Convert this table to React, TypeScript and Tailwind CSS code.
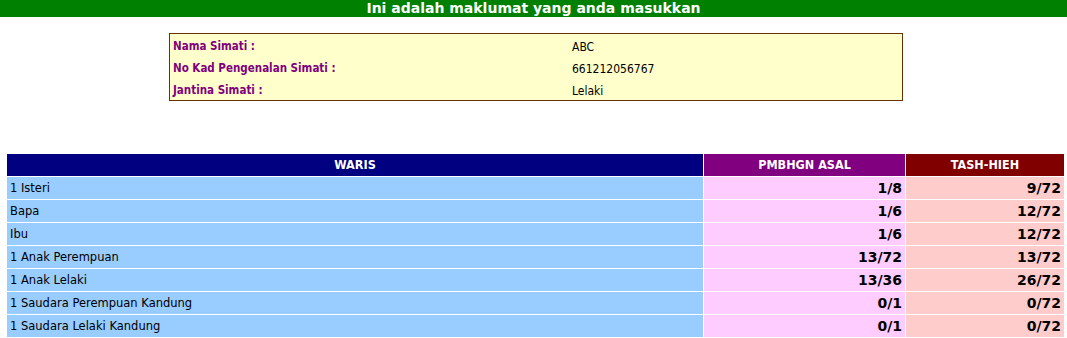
import React from 'react';

const rows = [
  { waris: '1 Isteri', asal: '1/8', tash: '9/72' },
  { waris: 'Bapa', asal: '1/6', tash: '12/72' },
  { waris: 'Ibu', asal: '1/6', tash: '12/72' },
  { waris: '1 Anak Perempuan', asal: '13/72', tash: '13/72' },
  { waris: '1 Anak Lelaki', asal: '13/36', tash: '26/72' },
  { waris: '1 Saudara Perempuan Kandung', asal: '0/1', tash: '0/72' },
  { waris: '1 Saudara Lelaki Kandung', asal: '0/1', tash: '0/72' },
];

const info = [
  { label: 'Nama Simati :', value: 'ABC' },
  { label: 'No Kad Pengenalan Simati :', value: '661212056767' },
  { label: 'Jantina Simati :', value: 'Lelaki' },
];

export default function App() {
  return (
    <div className="w-[1067px] h-[338px] bg-white overflow-hidden text-[12px] text-black font-['DejaVu_Sans_Condensed','DejaVu_Sans',sans-serif]">
      {/* Title bar */}
      <div className="h-[17px] bg-[#008000] text-white font-bold text-[14px] leading-[16px] text-center font-['DejaVu_Sans',sans-serif]">
        Ini adalah maklumat yang anda masukkan
      </div>

      {/* Simati info */}
      <div className="mt-[16px] ml-[169px] w-[734px] h-[68px] border border-[#663300] bg-[#ffffcc] py-px">
        {info.map((item) => (
          <div key={item.label} className="flex h-[22px] items-center pt-px">
            <div className="w-[402px] pl-[3px] font-bold text-[11.5px] text-[#800080]">{item.label}</div>
            <div>{item.value}</div>
          </div>
        ))}
      </div>

      {/* Waris table */}
      <div className="mt-[53px] ml-[7px] w-[1057px] grid grid-cols-[696px_201px_158px] gap-px">
        <div className="h-[22px] bg-[#000080] text-white font-bold text-[12.5px] flex items-center justify-center">WARIS</div>
        <div className="h-[22px] bg-[#800080] text-white font-bold text-[12.5px] flex items-center justify-center">PMBHGN ASAL</div>
        <div className="h-[22px] bg-[#800000] text-white font-bold text-[12.5px] flex items-center justify-center">TASH-HIEH</div>
        {rows.map((r) => (
          <React.Fragment key={r.waris}>
            <div className="h-[22px] bg-[#99ccff] flex items-center pl-[3px] pt-[2px] text-[11.5px] font-['DejaVu_Sans',sans-serif]">{r.waris}</div>
            <div className="h-[22px] bg-[#ffccff] flex items-center justify-end pr-[3px] pt-px font-bold text-[14px] font-['DejaVu_Sans',sans-serif]">{r.asal}</div>
            <div className="h-[22px] bg-[#ffcccc] flex items-center justify-end pr-[3px] pt-px font-bold text-[14px] font-['DejaVu_Sans',sans-serif]">{r.tash}</div>
          </React.Fragment>
        ))}
      </div>
    </div>
  );
}
